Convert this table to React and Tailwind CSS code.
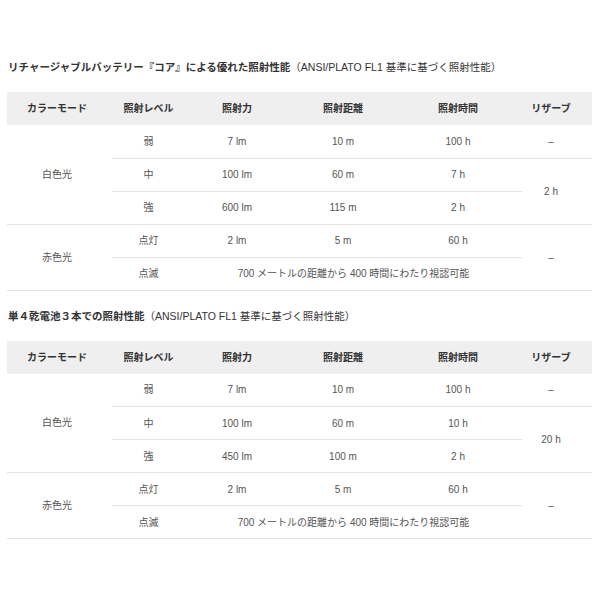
import React from "react";

const font = { fontFamily: '"Liberation Sans", "Noto Sans CJK JP", sans-serif' };

function Th({ children, extra = "" }) {
  return (
    <th className={`h-[33px] p-0 text-center align-middle text-[10px] font-bold text-[#333] ${extra}`}>
      {children}
    </th>
  );
}

function Td({ children, rowSpan, colSpan, extra = "", border = true }) {
  return (
    <td
      rowSpan={rowSpan}
      colSpan={colSpan}
      className={`h-[33px] p-0 text-center align-middle text-[10px] text-[#555] ${border ? "border-b border-[#e3e3e3]" : ""} ${extra}`}
    >
      {children}
    </td>
  );
}

function SpecTable({ rows, reserve }) {
  return (
    <table className="w-[585px] table-fixed border-collapse">
      <colgroup>
        <col className="w-[105px]" />
        <col className="w-[73px]" />
        <col className="w-[104px]" />
        <col className="w-[108px]" />
        <col className="w-[125px]" />
        <col className="w-[70px]" />
      </colgroup>
      <thead>
        <tr className="bg-[#efefef]">
          <Th extra="pr-[5px]">カラーモード</Th>
          <Th>照射レベル</Th>
          <Th>照射力</Th>
          <Th>照射距離</Th>
          <Th extra="pr-[3px]">照射時間</Th>
          <Th extra="pr-[12px]">リザーブ</Th>
        </tr>
      </thead>
      <tbody>
        <tr>
          <Td rowSpan={3} extra="pr-[5px]">白色光</Td>
          <Td>弱</Td>
          <Td>{rows[0][0]}</Td>
          <Td>{rows[0][1]}</Td>
          <Td extra="pr-[3px]">{rows[0][2]}</Td>
          <Td extra="pr-[12px]">–</Td>
        </tr>
        <tr>
          <Td>中</Td>
          <Td>{rows[1][0]}</Td>
          <Td>{rows[1][1]}</Td>
          <Td extra="pr-[3px]">{rows[1][2]}</Td>
          <Td rowSpan={2} extra="pr-[12px]">{reserve}</Td>
        </tr>
        <tr>
          <Td>強</Td>
          <Td>{rows[2][0]}</Td>
          <Td>{rows[2][1]}</Td>
          <Td extra="pr-[3px]">{rows[2][2]}</Td>
        </tr>
        <tr>
          <Td rowSpan={2} extra="pr-[5px]">赤色光</Td>
          <Td>点灯</Td>
          <Td>2 lm</Td>
          <Td>5 m</Td>
          <Td extra="pr-[3px]">60 h</Td>
          <Td rowSpan={2} extra="pr-[12px]">–</Td>
        </tr>
        <tr>
          <Td>点滅</Td>
          <Td colSpan={3}>700 メートルの距離から 400 時間にわたり視認可能</Td>
        </tr>
      </tbody>
    </table>
  );
}

export default function App() {
  return (
    <div className="w-[600px] h-[600px] bg-white px-[7px] pt-[59px]" style={font}>
      <div className="h-4 pl-[1px] text-[10.5px] leading-4 text-[#333]">
        <span className="font-bold">リチャージャブルバッテリー『コア』による優れた照射性能</span>
        <span>（ANSI/PLATO FL1 基準に基づく照射性能）</span>
      </div>
      <div className="mt-[17px]">
        <SpecTable
          rows={[
            ["7 lm", "10 m", "100 h"],
            ["100 lm", "60 m", "7 h"],
            ["600 lm", "115 m", "2 h"],
          ]}
          reserve="2 h"
        />
      </div>
      <div className="mt-[17px] h-4 pl-[1px] text-[10.5px] leading-4 text-[#333]">
        <span className="font-bold">単４乾電池３本での照射性能</span>
        <span>（ANSI/PLATO FL1 基準に基づく照射性能）</span>
      </div>
      <div className="mt-[17px]">
        <SpecTable
          rows={[
            ["7 lm", "10 m", "100 h"],
            ["100 lm", "60 m", "10 h"],
            ["450 lm", "100 m", "2 h"],
          ]}
          reserve="20 h"
        />
      </div>
    </div>
  );
}
